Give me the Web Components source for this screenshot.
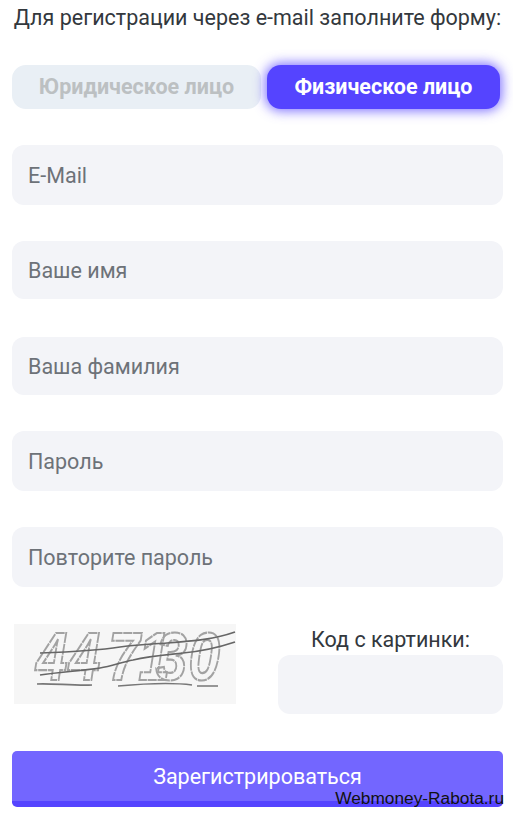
<!DOCTYPE html>
<html lang="ru">
<head>
<meta charset="utf-8">
<title>Регистрация</title>
<style>
  html, body { margin: 0; padding: 0; background: #fff; }
  body { width: 513px; height: 816px; overflow: hidden; position: relative; font-family: Roboto, "Liberation Sans", sans-serif; }
</style>
</head>
<body>
<reg-form>
  <reg-tabs slot="tabs">
    <reg-tab>Юридическое лицо</reg-tab>
    <reg-tab active>Физическое лицо</reg-tab>
  </reg-tabs>
  <reg-field slot="fields" h="60" after="36">E-Mail</reg-field>
  <reg-field slot="fields" h="58" after="38">Ваше имя</reg-field>
  <reg-field slot="fields" h="58" after="36">Ваша фамилия</reg-field>
  <reg-field slot="fields" h="60" after="36">Пароль</reg-field>
  <reg-field slot="fields" h="60" after="0">Повторите пароль</reg-field>
  <reg-captcha slot="captcha"></reg-captcha>
</reg-form>
<site-mark>Webmoney-Rabota.ru</site-mark>

<script>
const regTab = (function(){
  const shadowDOM = /*html*/
  `
    <style>
      :host { display: flex; align-items: center; justify-content: center; height: 44px; border-radius: 14px;
        background: #e9eff5; color: #bcc0c2; font: 700 21.5px/44px Roboto, sans-serif; width: 249px; }
      :host([active]) { width: 233px; background: #5544ff; color: #fff; box-shadow: 0 0 12px 2px rgba(85,68,255,.75); }
    </style>
    <slot></slot>
  `;
  class RegTab extends HTMLElement {
    connectedCallback(){
      const shadow = this.attachShadow({mode: 'open'});
      shadow.innerHTML = shadowDOM;
    }
  }
  return RegTab;
})()
customElements.define('reg-tab', regTab);

const regTabs = (function(){
  const shadowDOM = /*html*/
  `
    <style>
      :host { display: flex; gap: 6px; margin-bottom: 36px; }
    </style>
    <slot></slot>
  `;
  class RegTabs extends HTMLElement {
    connectedCallback(){
      const shadow = this.attachShadow({mode: 'open'});
      shadow.innerHTML = shadowDOM;
    }
  }
  return RegTabs;
})()
customElements.define('reg-tabs', regTabs);

const regField = (function(){
  const shadowDOM = /*html*/
  `
    <style>
      :host { display: flex; align-items: center; box-sizing: border-box; padding-left: 16px;
        background: #f3f4f8; border-radius: 12px; color: #6d7278; font: 400 21.5px Roboto, sans-serif; }
    </style>
    <slot></slot>
  `;
  class RegField extends HTMLElement {
    connectedCallback(){
      const shadow = this.attachShadow({mode: 'open'});
      shadow.innerHTML = shadowDOM;
      this.style.height = this.getAttribute('h') + 'px';
      this.style.marginBottom = this.getAttribute('after') + 'px';
    }
  }
  return RegField;
})()
customElements.define('reg-field', regField);

const regCaptcha = (function(){
  const shadowDOM = /*html*/
  `
    <style>
      :host { display: flex; justify-content: space-between; margin-top: 37px; }
      /* svg is taller than the grey picture so the big digits keep their line box */
      .pic { display: block; width: 222px; height: 100px; margin: -10px 0 -10px 2px; }
      .soft { filter: blur(.6px); }
      .side { width: 225px; display: flex; flex-direction: column; align-items: center; }
      .label { font: 400 21.5px/26px Roboto, sans-serif; color: #33383d; height: 31px; padding-top: 3px; box-sizing: border-box; }
      .box { width: 225px; height: 59px; background: #f3f4f8; border-radius: 12px; }
    </style>
    <svg class="pic" viewBox="0 -10 222 100" aria-label="447130">
      <rect x="0" y="0" width="222" height="80" fill="#f6f6f6"/>
      <g class="soft" transform="translate(-14,-624)">
        <text transform="translate(36,680) scale(.82,1)" x="0 40 88 125 146 186" y="0" font-family="Liberation Sans, sans-serif" font-weight="700" font-style="italic" font-size="69"
          fill="none" stroke="#a2a2a2" stroke-width="2.2" stroke-dasharray="11 1">447130</text>
        <path d="M40 653 C70 652 95 651 120 647 C140 644 155 644 167 643 C195 641 215 639 235 632" fill="none" stroke="#666" stroke-width="1.7"/>
        <path d="M40 675 C60 672 80 671 100 668 C112 666 122 662 133 660 C150 656 165 655 183 653 C205 651 220 647 235 642" fill="none" stroke="#666" stroke-width="1.7"/>
        <path d="M37 684 C50 683 75 686 92 685 M118 686 C140 684 170 682 192 685 M197 686 L218 686" fill="none" stroke="#777" stroke-width="1.7"/>
      </g>
    </svg>
    <div class="side">
      <div class="label">Код с картинки:</div>
      <div class="box"></div>
    </div>
  `;
  class RegCaptcha extends HTMLElement {
    connectedCallback(){
      const shadow = this.attachShadow({mode: 'open'});
      shadow.innerHTML = shadowDOM;
    }
  }
  return RegCaptcha;
})()
customElements.define('reg-captcha', regCaptcha);

const regForm = (function(){
  const shadowDOM = /*html*/
  `
    <style>
      :host { display: block; box-sizing: border-box; width: 513px; padding: 0 10px 0 12px; }
      h1 { margin: 0; padding: 6px 0 0; height: 65px; box-sizing: border-box; font: 400 21.5px/24px Roboto, sans-serif;
        color: #33383d; white-space: nowrap; text-align: center; }
      .send { display: flex; align-items: center; justify-content: center; box-sizing: border-box; height: 56px; margin-top: 37px;
        background: #7366ff; color: #fff; border-bottom: 6px solid #5544ff; border-radius: 5px; font: 400 21.5px Roboto, sans-serif; }
    </style>
    <h1>Для регистрации через e-mail заполните форму:</h1>
    <slot name="tabs"></slot>
    <slot name="fields"></slot>
    <slot name="captcha"></slot>
    <div class="send">Зарегистрироваться</div>
  `;
  class RegForm extends HTMLElement {
    connectedCallback(){
      const shadow = this.attachShadow({mode: 'open'});
      shadow.innerHTML = shadowDOM;
    }
  }
  return RegForm;
})()
customElements.define('reg-form', regForm);

const siteMark = (function(){
  const shadowDOM = /*html*/
  `
    <style>
      :host { position: absolute; right: 9px; top: 789px; font: 400 17.3px/18px "Liberation Sans", Arial, sans-serif; color: #111; }
    </style>
    <slot></slot>
  `;
  class SiteMark extends HTMLElement {
    connectedCallback(){
      const shadow = this.attachShadow({mode: 'open'});
      shadow.innerHTML = shadowDOM;
    }
  }
  return SiteMark;
})()
customElements.define('site-mark', siteMark);
</script>
</body>
</html>
